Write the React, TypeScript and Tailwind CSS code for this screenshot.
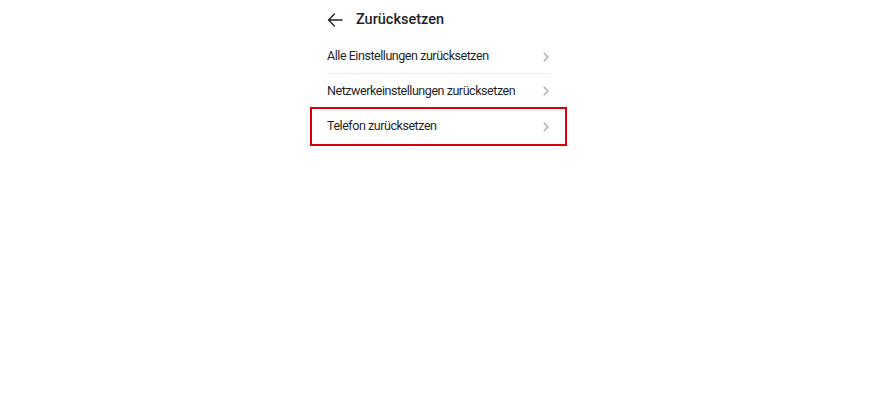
export default function App() {
  const items = [
    { label: 'Alle Einstellungen zurücksetzen', divider: true },
    { label: 'Netzwerkeinstellungen zurücksetzen', divider: false },
  ];

  const Chevron = () => (
    <svg width="8" height="10" viewBox="0 0 8 10" fill="none" className="shrink-0">
      <path d="M2 1l4 4-4 4" stroke="#a8a8a8" strokeWidth="1.1" strokeLinecap="round" strokeLinejoin="round" />
    </svg>
  );

  return (
    <div className="w-full h-[400px] bg-white font-['Roboto',sans-serif] text-[#1f1f1f]">
      <div className="mx-[310px] w-[257px]">
        <div className="h-[38px] flex items-center pl-[17px] pt-[2px]">
          <svg width="16" height="14" viewBox="0 0 16 14" fill="none">
            <path d="M15 7H1.5M7.5 1L1.5 7l6 6" stroke="#222" strokeWidth="1.4" strokeLinecap="round" strokeLinejoin="round" />
          </svg>
          <span className="ml-[13px] text-[14.5px] font-medium">Zurücksetzen</span>
        </div>

        {items.map((it, i) => (
          <div key={i} className="px-[17px]">
            <div
              className={`flex items-center justify-between ${i === 0 ? 'h-[36px] pt-[2px] border-b border-[#ececec]' : 'h-[33px] pt-px'}`}
            >
              <span className="text-[12.5px] tracking-[-0.45px]">{it.label}</span>
              <Chevron />
            </div>
          </div>
        ))}

        <div className="h-[39px] border-2 border-[#d9000d] flex items-center justify-between pl-[15px] pr-[15px]">
          <span className="text-[12.5px] tracking-[-0.45px]">Telefon zurücksetzen</span>
          <Chevron />
        </div>
      </div>
    </div>
  );
}
